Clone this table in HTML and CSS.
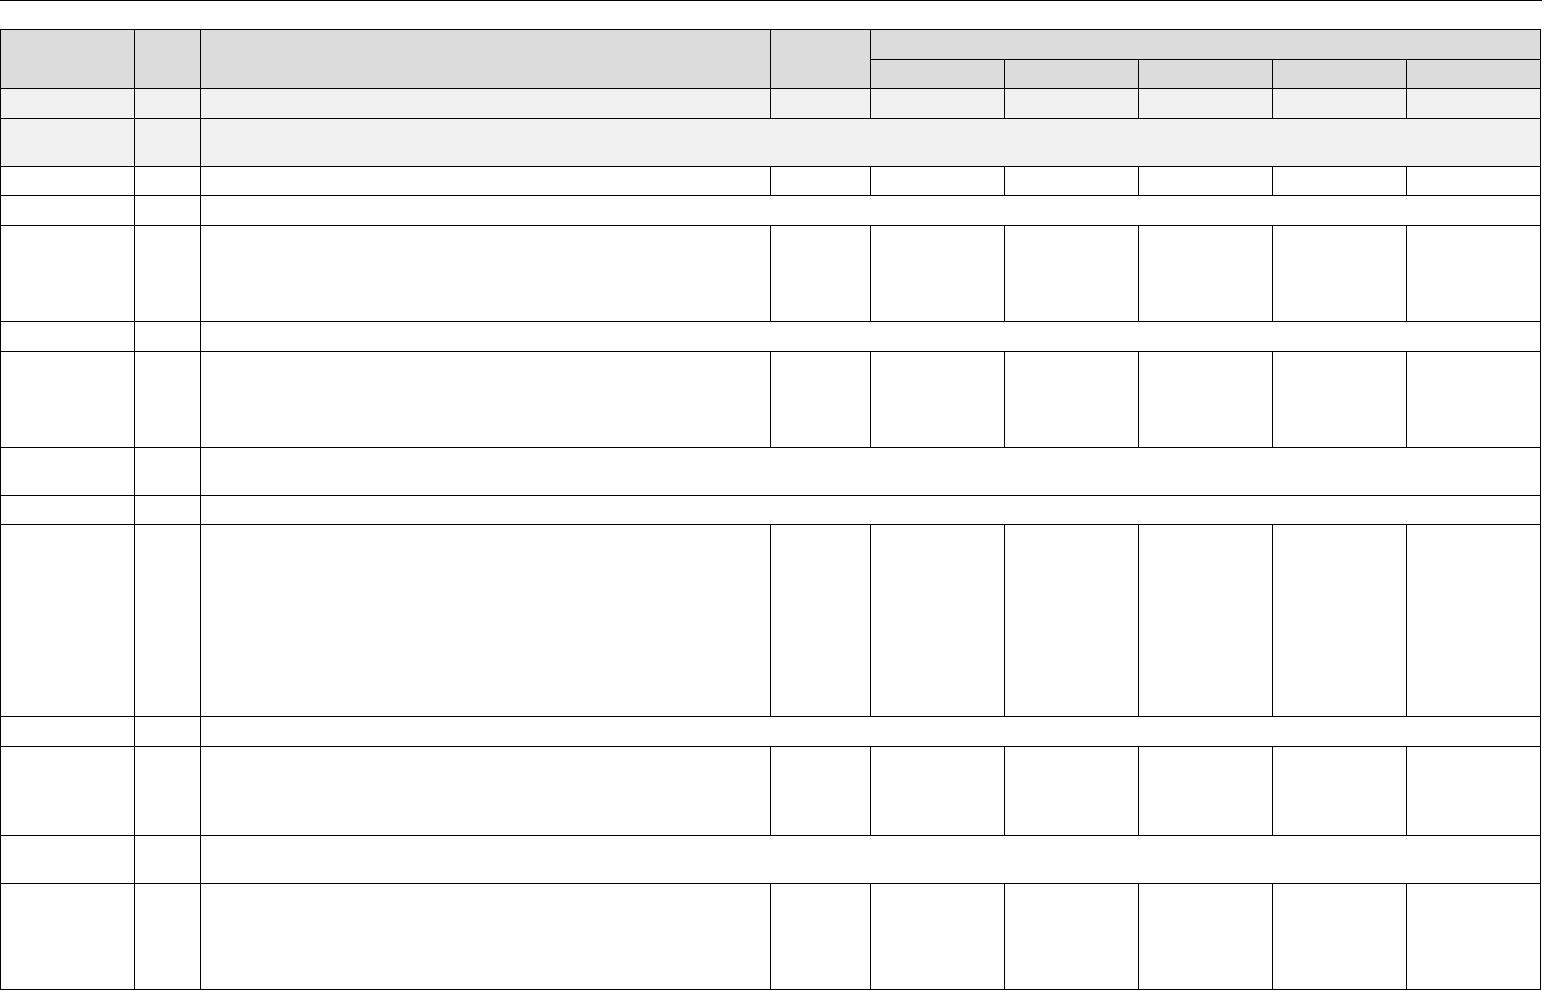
FILE: index.html
```html
<!DOCTYPE html>
<html lang="en">
<head>
<meta charset="utf-8">
<title>Table</title>
<link rel="stylesheet" href="styles.css">
</head>
<body>
<div class="rule"></div>
<div class="sheet">
  <div class="c hd r2"></div>
  <div class="c hd r2"></div>
  <div class="c hd r2"></div>
  <div class="c hd r2"></div>
  <div class="c hd s5"></div>
  <div class="c hd"></div><div class="c hd"></div><div class="c hd"></div><div class="c hd"></div><div class="c hd"></div>

  <div class="c lt"></div><div class="c lt"></div><div class="c lt"></div><div class="c lt"></div><div class="c lt"></div><div class="c lt"></div><div class="c lt"></div><div class="c lt"></div><div class="c lt"></div>

  <div class="c lt"></div><div class="c lt"></div><div class="c lt s7"></div>

  <div class="c"></div><div class="c"></div><div class="c"></div><div class="c"></div><div class="c"></div><div class="c"></div><div class="c"></div><div class="c"></div><div class="c"></div>

  <div class="c"></div><div class="c"></div><div class="c s7"></div>

  <div class="c"></div><div class="c"></div><div class="c"></div><div class="c"></div><div class="c"></div><div class="c"></div><div class="c"></div><div class="c"></div><div class="c"></div>

  <div class="c"></div><div class="c"></div><div class="c s7"></div>

  <div class="c"></div><div class="c"></div><div class="c"></div><div class="c"></div><div class="c"></div><div class="c"></div><div class="c"></div><div class="c"></div><div class="c"></div>

  <div class="c"></div><div class="c"></div><div class="c s7"></div>

  <div class="c"></div><div class="c"></div><div class="c s7"></div>

  <div class="c"></div><div class="c"></div><div class="c"></div><div class="c"></div><div class="c"></div><div class="c"></div><div class="c"></div><div class="c"></div><div class="c"></div>

  <div class="c"></div><div class="c"></div><div class="c s7"></div>

  <div class="c"></div><div class="c"></div><div class="c"></div><div class="c"></div><div class="c"></div><div class="c"></div><div class="c"></div><div class="c"></div><div class="c"></div>

  <div class="c"></div><div class="c"></div><div class="c s7"></div>

  <div class="c"></div><div class="c"></div><div class="c"></div><div class="c"></div><div class="c"></div><div class="c"></div><div class="c"></div><div class="c"></div><div class="c"></div>
</div>
</body>
</html>
```
FILE: styles.css
```css
html, body {
  margin: 0;
  padding: 0;
  background: #ffffff;
  font-family: "Liberation Sans", Arial, sans-serif;
}

.rule {
  width: 1542px;
  height: 1px;
  background: #000000;
  margin-bottom: 28px;
}

.sheet {
  display: grid;
  width: 1541px;
  box-sizing: border-box;
  padding: 1px;
  gap: 1px;
  background: #000000;
  grid-template-columns: 133px 65px 569px 99px 133px 133px 133px 133px 133px;
  grid-template-rows: 29px 28px 29px 47px 28px 29px 95px 29px 95px 47px 28px 191px 29px 88px 47px 105px;
}

.c {
  background: #ffffff;
}

.hd {
  background: #dcdcdc;
}

.lt {
  background: #f0f0f0;
}

.r2 {
  grid-row: span 2;
}

.s5 {
  grid-column: span 5;
}

.s7 {
  grid-column: span 7;
}
```
